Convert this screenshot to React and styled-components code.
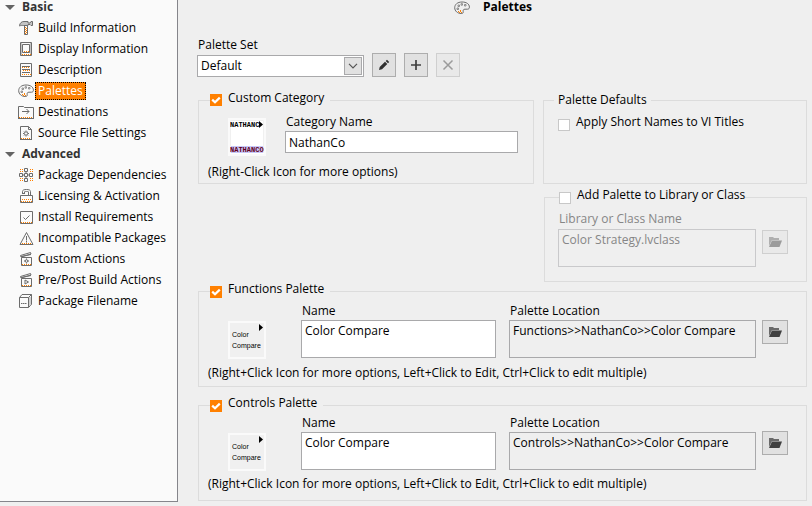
import React from "react";
import styled, { createGlobalStyle, css } from "styled-components";

const FONT = '"Open Sans", "Noto Sans", sans-serif';
const ORANGE = "#ff8000";
const GRAY = "#6c6c6c";

const GlobalStyle = createGlobalStyle`
  *, *::before, *::after { box-sizing: border-box; }
  body {
    margin: 0;
    background: #efefef;
    color: #000;
    font: 12px/16px ${FONT};
  }
  button, input, select, textarea { font: inherit; color: inherit; margin: 0; }
`;

/* ---------- layout ---------- */

const Page = styled.div`
  display: flex;
  min-height: 100vh;
`;

const Sidebar = styled.nav`
  flex: 0 0 178px;
  margin-bottom: 4px;
  background: #fafafa;
  border-right: 1px solid #85858b;
  border-bottom: 1px solid #85858b;
`;

const SectionToggle = styled.button`
  display: flex;
  align-items: center;
  gap: 7px;
  width: 100%;
  height: ${(p) => (p.$first ? 18 : 21)}px;
  padding: 0 0 ${(p) => (p.$first ? 4 : 1)}px 5px;
  border: 0;
  background: none;
  color: #333;
  font-weight: 700;
  line-height: 14px;
  text-align: left;
`;

const TreeList = styled.ul`
  margin: 0;
  padding: 0;
  list-style: none;
`;

const TreeLink = styled.a`
  display: flex;
  align-items: center;
  gap: 1px;
  height: 21px;
  padding: 0 0 1px 18px;
  color: #000;
  text-decoration: none;
  white-space: nowrap;
`;

const TreeLabel = styled.span`
  padding: 0 2px;
  border: 1px solid transparent;
  line-height: 16px;
  ${(p) =>
    p.$selected &&
    css`
      background: ${ORANGE};
      border: 1px dotted #000;
      color: #fff;
    `}
`;

const Main = styled.main`
  flex: 1;
  min-width: 0;
  padding: 0 5px 0 19px;
`;

const Header = styled.header`
  display: flex;
  justify-content: center;
  gap: 13px;
  height: 37px;
  padding-right: 18px;
`;

const Title = styled.h1`
  margin: 0;
  font-size: 12px;
  line-height: 14px;
  font-weight: 700;
`;

const Toolbar = styled.div`
  display: flex;
  align-items: flex-end;
  gap: 8px;
  margin-bottom: 14px;
`;

const Field = styled.div`
  display: flex;
  flex-direction: column;
  flex: ${(p) => p.$grow || "none"};
  min-width: 0;
  gap: ${(p) => p.$gap || 1}px;
`;

const FieldLabel = styled.label`
  padding-left: 1px;
  line-height: 16px;
  color: ${(p) => (p.$dim ? "#868686" : "#000")};
`;

const Groups = styled.div`
  display: grid;
  grid-template-columns: minmax(0, 336fr) minmax(0, 264fr);
  column-gap: 9px;
  padding-left: 1px;
`;

const Group = styled.fieldset`
  min-width: 0;
  margin: ${(p) => p.$top || 0}px 0 0;
  padding: 0 9px;
  border: 1px solid #dcdcdc;
  grid-column: ${(p) => p.$column || "auto"};
`;

const LibraryGroup = styled(Group)`
  margin-left: 1px;
`;

const Legend = styled.legend`
  display: flex;
  align-items: flex-start;
  height: 18px;
  margin-left: ${(p) => (p.$inset ? 5 : 2)}px;
  padding: 0 ${(p) => (p.$inset ? 0 : 6)}px 0 0;
`;

const PlainLegend = styled.legend`
  height: 18px;
  margin-left: 1px;
  padding: 0 4px;
  line-height: 18px;
`;

const LegendLabel = styled.label`
  padding-left: 6px;
  line-height: 14px;
`;

const GroupBody = styled.div`
  display: flex;
  flex-direction: column;
  gap: ${(p) => p.$gap || 6}px;
  padding: ${(p) => p.$pad};
`;

const Row = styled.div`
  display: flex;
  align-items: flex-start;
  padding: 0 ${(p) => p.$right || 0}px 0 ${(p) => p.$left || 0}px;
  gap: ${(p) => p.$gap || 0}px;
`;

const FieldsRow = styled.div`
  display: flex;
  flex: 1;
  min-width: 0;
  gap: 13px;
  padding: 0 6px 0 35px;
`;

const Hint = styled.p`
  margin: 0;
  line-height: 16px;
`;

/* ---------- controls ---------- */

const Check = styled.input.attrs({ type: "checkbox" })`
  appearance: none;
  flex: none;
  width: 12px;
  height: 12px;
  margin-top: ${(p) => p.$drop || 0}px;
  border: 1px solid #c8c8c8;
  background: #fff;
  &:checked {
    border-color: ${ORANGE};
    background: ${ORANGE}
      url("data:image/svg+xml,%3Csvg xmlns='http://www.w3.org/2000/svg' viewBox='0 0 10 10'%3E%3Cpath d='M1.2 4.6 4 7.3 8.8 2.6' fill='none' stroke='white' stroke-width='2.2'/%3E%3C/svg%3E");
  }
`;

const CheckLabel = styled.label`
  padding-left: 6px;
`;

const SelectWrap = styled.span`
  display: grid;
  grid-template-columns: 1fr 19px;
  align-items: center;
  width: 167px;
  height: 22px;
  border: 1px solid #a9a9ab;
  background: #fff;
`;

const Select = styled.select`
  grid-area: 1 / 1 / 2 / 3;
  appearance: none;
  width: 100%;
  height: 20px;
  padding: 0 22px 0 3px;
  border: 0;
  background: none;
`;

const SelectArrow = styled.span`
  grid-area: 1 / 2;
  display: grid;
  place-items: center;
  width: 18px;
  height: 18px;
  border: 1px solid #a9a9ab;
  background: #e1e1e1;
  pointer-events: none;
`;

const textBox = css`
  display: block;
  width: 100%;
  border: 1px solid ${(p) => (p.disabled ? "#c9c9cb" : "#a9a9ab")};
  border-radius: 0;
  outline: 0;
  line-height: 16px;
`;

const TextInput = styled.input`
  ${textBox}
  height: 22px;
  padding: 0 3px;
  background: #fff;
`;

const TextArea = styled.textarea`
  ${textBox}
  height: 38px;
  padding: 2px 3px;
  resize: none;
  overflow: hidden;
  background: ${(p) => (p.readOnly ? "#efefef" : "#fff")};
  &:disabled { color: #868686; }
`;

const SquareButton = styled.button`
  display: grid;
  place-items: center;
  flex: none;
  width: ${(p) => (p.$wide ? 26 : 24)}px;
  height: 24px;
  margin-top: ${(p) => p.$drop || 0}px;
  padding: 0;
  border: 1px solid #adadad;
  background: #e1e1e1;
  color: #404040;
  &:disabled {
    border-color: #cfcfcf;
    background: #e9e9e9;
    color: #9b9b9b;
  }
`;

const Tile = styled.button`
  display: block;
  flex: none;
  width: 38px;
  height: 38px;
  margin-top: ${(p) => p.$drop}px;
  padding: 0;
  border: 2px solid #fafafa;
  background: ${(p) => p.$fill};
`;

const TileArt = styled.svg`
  display: block;
  width: 34px;
  height: 34px;
  font: 7px "Liberation Sans", sans-serif;
`;

const MonoText = styled.text`
  font: 700 7px "Liberation Mono", monospace;
`;

const Glyph = styled.svg`
  display: block;
  flex: none;
`;

/* ---------- icons ---------- */

const Icon = ({ children }) => (
  <Glyph width="16" height="16" viewBox="0 0 16 16" fill="none" stroke={GRAY} aria-hidden="true">
    {children}
  </Glyph>
);

const Dots = ({ d }) => <path d={d} stroke={ORANGE} strokeDasharray="1 1" />;

const HammerIcon = () => (
  <Icon>
    <path d="M1.500 5.500c.5-2.500 2-4 4.500-4h4v1.500h2l1-1.500h1.500v4H13l-1-1h-2v1H5.500c-1.500 0-2.500-.3-4 .5z" fill="#c4c4c4" />
    <path d="M6.500 5.500v9h3v-9" />
    <Dots d="M7.500 7v7" />
    <Dots d="M8.500 8v6" />
  </Icon>
);

const DisplayIcon = () => (
  <Icon>
    <path d="M2.500 1.500h11v13h-11zM4.500 3.500h7v8h-7z" />
    <path d="M3.500 2v12M12.500 2v12" stroke="#c4c4c4" />
    <Dots d="M6 10.500h5" />
    <Dots d="M4 13.500h9" />
  </Icon>
);

const DescriptionIcon = () => (
  <Icon>
    <path d="M2.500 1.500h11v13h-11z" />
    <path d="M4 4.500h8M4 7.500h8M4 10.500h8" />
    <Dots d="M5 8.500h7" />
    <Dots d="M4 5.500h8" />
    <Dots d="M4 12.500h9" />
  </Icon>
);

const PaletteIcon = () => (
  <Icon>
    <path d="M8 2C3.500 2 .7 4.500.7 7.700c0 3.500 3 5.800 6.500 5.800 1.800 0 2.300-.8 2-2-.3-1.500.3-2.300 1.800-2.300h2.500c1.300 0 1.900-.8 1.900-2C15.400 4 12.500 2 8 2z" />
    <path d="M4 5h1.500v1.500H4zM7 3.700h1.500v1.500H7zM10.500 4.500H12V6h-1.500zM3 8h1.500v1.500H3z" strokeWidth=".7" />
    <Dots d="M4 11.500h4" />
    <Dots d="M5 12.500h4" />
    <Dots d="M6 10.500h2" />
  </Icon>
);

const DestinationsIcon = () => (
  <Icon>
    <path d="M.5 14V2.500h5l1 1h9V14" />
    <path d="M4 7.500h7M8.500 5l2.500 2.500L8.500 10" />
    <path d="M0 14.500h16" />
    <Dots d="M1 13.500h14" />
  </Icon>
);

const SourceIcon = () => (
  <Icon>
    <path d="M2.500 14V1.500h8l3 3V14M10.500 1.500v3h3M2 14.500h12" />
    <circle cx="8" cy="8.500" r="1.700" />
    <path d="M8 5.500v1M8 10.500v1M5 8.500h1M10 8.500h1M6 6.500l.6.600M10 10.500l-.6-.6M10 6.500l-.6.600M6 10.500l.6-.6" />
    <Dots d="M3 13.500h10" />
  </Icon>
);

const DependenciesIcon = () => (
  <Icon>
    <path d="M6.500 1.500h3v3h-3zM6.500 11.500h3v3h-3zM1.500 6.500h3v3h-3zM11.500 6.500h3v3h-3zM6.500 6.500h3v3h-3z" />
    <path d="M8 4v2M8 10v2M4 8h2M10 8h2" />
    <Dots d="M2 2.500h3" />
    <Dots d="M12 2.500h3" />
    <Dots d="M2 4.500h3" />
    <Dots d="M12 4.500h3" />
    <Dots d="M2 11.500h3" />
    <Dots d="M12 11.500h3" />
    <Dots d="M2 13.500h3" />
    <Dots d="M12 13.500h3" />
  </Icon>
);

const LockIcon = () => (
  <Icon>
    <path d="M2.500 14.500v-7h12v7z" />
    <path d="M4.500 5V3.500c0-1.500 1.500-2 4-2s4 .5 4 2v4M6.500 5V4c0-.5.500-.5 2-.5s2 0 2 .5v3.500M4 5.500h3" />
    <Dots d="M4 11.500h10" />
    <Dots d="M3 13.500h11" />
  </Icon>
);

const InstallIcon = () => (
  <Icon>
    <path d="M2.500 14.500V2.500h12v12zM5.500 8.500l2 2 4-4" />
    <Dots d="M3 13.500h11" />
  </Icon>
);

const WarningIcon = () => (
  <Icon>
    <path d="M2 14.500 8.500 2.500 15 14.500zM8.500 6v4.500M8.500 11v1.500" />
    <Dots d="M4 13.500h10" />
  </Icon>
);

const Clapper = ({ children }) => (
  <Icon>
    <path d="M3.500 14.500V6.500h10v8zM3 6l-.5-1.500 10-3 .5 1.500zM3 5.500l10-2" />
    {children}
    <Dots d="M4 13.500h9" />
  </Icon>
);

const ActionsIcon = () => (
  <Clapper>
    <circle cx="8.500" cy="10" r="1.300" />
    <path d="M8.500 7.500v1M8.500 11.500v1M6 10h1M10 10h1" />
  </Clapper>
);

const BuildActionsIcon = () => (
  <Clapper>
    <path d="M7 8v4l3.500-2z" />
  </Clapper>
);

const PackageIcon = () => (
  <Icon>
    <path d="M1.500 4.500h9v10h-9zM1.500 4.500l2.500-3h9.500v10l-3 3M10.500 4.500l3-3" />
    <path d="M12 4v9" stroke="#aaa" />
    <path d="M3 10.500h6" strokeDasharray="1.500 .5" />
  </Icon>
);

const FolderIcon = () => (
  <Glyph width="14" height="12" viewBox="0 0 14 12" aria-hidden="true">
    <path d="M1 10V1h4l1 1h5v2H4L1 10z" fill="currentColor" opacity=".75" />
    <path d="M1 11 4 4.500h10L11.500 11z" fill="currentColor" />
  </Glyph>
);

const PencilIcon = () => (
  <Glyph width="12" height="12" viewBox="0 0 12 12" aria-hidden="true">
    <path d="M1 11l.7-3L7 2.700l2.300 2.300L4 10.300zM7.700 2 9 .8l2.200 2.200L10 4.300z" fill="#303030" />
  </Glyph>
);

const PlusIcon = () => (
  <Glyph width="12" height="12" viewBox="0 0 12 12" aria-hidden="true">
    <path d="M6 1v10M1 6h10" stroke="currentColor" strokeWidth="1.700" />
  </Glyph>
);

const CrossIcon = () => (
  <Glyph width="12" height="12" viewBox="0 0 12 12" aria-hidden="true">
    <path d="M1.500 1.500l9 9M10.500 1.500l-9 9" stroke="currentColor" strokeWidth="1.500" />
  </Glyph>
);

const ChevronIcon = () => (
  <Glyph width="10" height="6" viewBox="0 0 10 6" fill="none" aria-hidden="true">
    <path d="M1 .8l4 4 4-4" stroke="#555" strokeWidth="1.200" />
  </Glyph>
);

const ExpandedIcon = () => (
  <Glyph width="10" height="5" viewBox="0 0 10 5" aria-hidden="true">
    <path d="M0 0h10L5 5z" fill="#646464" />
  </Glyph>
);

/* ---------- pieces ---------- */

const SECTIONS = [
  {
    name: "Basic",
    items: [
      ["Build Information", HammerIcon],
      ["Display Information", DisplayIcon],
      ["Description", DescriptionIcon],
      ["Palettes", PaletteIcon],
      ["Destinations", DestinationsIcon],
      ["Source File Settings", SourceIcon],
    ],
  },
  {
    name: "Advanced",
    items: [
      ["Package Dependencies", DependenciesIcon],
      ["Licensing & Activation", LockIcon],
      ["Install Requirements", InstallIcon],
      ["Incompatible Packages", WarningIcon],
      ["Custom Actions", ActionsIcon],
      ["Pre/Post Build Actions", BuildActionsIcon],
      ["Package Filename", PackageIcon],
    ],
  },
];

const CheckLegend = ({ id, checked, inset, drop = 4, children }) => (
  <Legend $inset={inset}>
    <Check id={id} defaultChecked={checked} $drop={drop} />
    <LegendLabel htmlFor={id}>{children}</LegendLabel>
  </Legend>
);

const CompareTile = () => (
  <Tile type="button" aria-label="Palette icon" $drop={18} $fill="#f0f0f0">
    <TileArt viewBox="0 0 34 34">
      <path d="M29 1v7l4-3.500z" />
      <text x="2" y="14">Color</text>
      <text x="2" y="25">Compare</text>
    </TileArt>
  </Tile>
);

const PaletteGroup = ({ id, title, location, top, pad, gap, drop }) => (
  <Group $top={top} $column="1 / -1">
    <CheckLegend id={id} checked>{title}</CheckLegend>
    <GroupBody $pad={pad} $gap={gap}>
      <Row $left={20} $right={9}>
        <CompareTile />
        <FieldsRow>
          <Field $grow="195 1 0">
            <FieldLabel htmlFor={`${id}-name`}>Name</FieldLabel>
            <TextArea id={`${id}-name`} defaultValue="Color Compare" spellCheck={false} />
          </Field>
          <Field $grow="247 1 0">
            <FieldLabel htmlFor={`${id}-location`}>Palette Location</FieldLabel>
            <TextArea id={`${id}-location`} readOnly defaultValue={location} spellCheck={false} />
          </Field>
        </FieldsRow>
        <SquareButton type="button" $wide $drop={drop} aria-label="Browse palette location">
          <FolderIcon />
        </SquareButton>
      </Row>
      <Hint>(Right+Click Icon for more options, Left+Click to Edit, Ctrl+Click to edit multiple)</Hint>
    </GroupBody>
  </Group>
);

export default function App() {
  return (
    <>
      <GlobalStyle />
      <Page>
        <Sidebar aria-label="Build settings">
          {SECTIONS.map((section, index) => (
            <React.Fragment key={section.name}>
              <SectionToggle type="button" aria-expanded="true" $first={index === 0}>
                <ExpandedIcon />
                {section.name}
              </SectionToggle>
              <TreeList>
                {section.items.map(([name, ItemIcon]) => (
                  <li key={name}>
                    <TreeLink href="#" aria-current={name === "Palettes" ? "page" : undefined}>
                      <ItemIcon />
                      <TreeLabel $selected={name === "Palettes"}>{name}</TreeLabel>
                    </TreeLink>
                  </li>
                ))}
              </TreeList>
            </React.Fragment>
          ))}
        </Sidebar>

        <Main>
          <Header>
            <PaletteIcon />
            <Title>Palettes</Title>
          </Header>

          <Toolbar>
            <Field $gap={2}>
              <FieldLabel htmlFor="palette-set">Palette Set</FieldLabel>
              <SelectWrap>
                <Select id="palette-set" defaultValue="Default">
                  <option>Default</option>
                </Select>
                <SelectArrow><ChevronIcon /></SelectArrow>
              </SelectWrap>
            </Field>
            <SquareButton type="button" aria-label="Rename palette set"><PencilIcon /></SquareButton>
            <SquareButton type="button" aria-label="Add palette set"><PlusIcon /></SquareButton>
            <SquareButton type="button" aria-label="Remove palette set" disabled><CrossIcon /></SquareButton>
          </Toolbar>

          <Groups>
            <Group>
              <CheckLegend id="custom-category" checked drop={3}>Custom Category</CheckLegend>
              <GroupBody $pad="5px 0 3px" $gap={8}>
                <Row $left={20} $right={6} $gap={19}>
                  <Tile type="button" aria-label="Category icon" $drop={4} $fill="#fff">
                    <TileArt viewBox="0 0 34 34">
                      <path d="M.5 33V.5h33V33" fill="none" stroke="#f0f0f0" />
                      <MonoText x="0" y="7">NATHANC</MonoText>
                      <path d="M29 1v7l4-3.500z" />
                      <path d="M1 26h32v7H1z" fill="#c8c8f8" />
                      <MonoText x="0" y="32" fill="#600020">NATHANCO</MonoText>
                    </TileArt>
                  </Tile>
                  <Field $grow="1">
                    <FieldLabel htmlFor="category-name">Category Name</FieldLabel>
                    <TextInput id="category-name" type="text" defaultValue="NathanCo" spellCheck={false} />
                  </Field>
                </Row>
                <Hint>(Right-Click Icon for more options)</Hint>
              </GroupBody>
            </Group>

            <Group>
              <PlainLegend>Palette Defaults</PlainLegend>
              <GroupBody $pad="5px 0 0">
                <Row $left={5}>
                  <Check id="short-names" $drop={5} />
                  <CheckLabel htmlFor="short-names">Apply Short Names to VI Titles</CheckLabel>
                </Row>
              </GroupBody>
            </Group>

            <LibraryGroup $top={4} $column="2">
              <CheckLegend id="library-palette" inset>Add Palette to Library or Class</CheckLegend>
              <GroupBody $pad="5px 0 14px">
                <Row $left={4} $right={9} $gap={6}>
                  <Field $grow="1" $gap={2}>
                    <FieldLabel htmlFor="library-name" $dim>Library or Class Name</FieldLabel>
                    <TextArea id="library-name" readOnly disabled defaultValue="Color Strategy.lvclass" spellCheck={false} />
                  </Field>
                  <SquareButton type="button" $wide $drop={19} disabled aria-label="Browse library or class">
                    <FolderIcon />
                  </SquareButton>
                </Row>
              </GroupBody>
            </LibraryGroup>

            <PaletteGroup
              id="functions-palette"
              title="Functions Palette"
              location="Functions>>NathanCo>>Color Compare"
              pad="3px 0 5px"
              gap={6}
              drop={17}
            />
            <PaletteGroup
              id="controls-palette"
              title="Controls Palette"
              location="Controls>>NathanCo>>Color Compare"
              top={9}
              pad="1px 0 8px"
              gap={5}
              drop={16}
            />
          </Groups>
        </Main>
      </Page>
    </>
  );
}
